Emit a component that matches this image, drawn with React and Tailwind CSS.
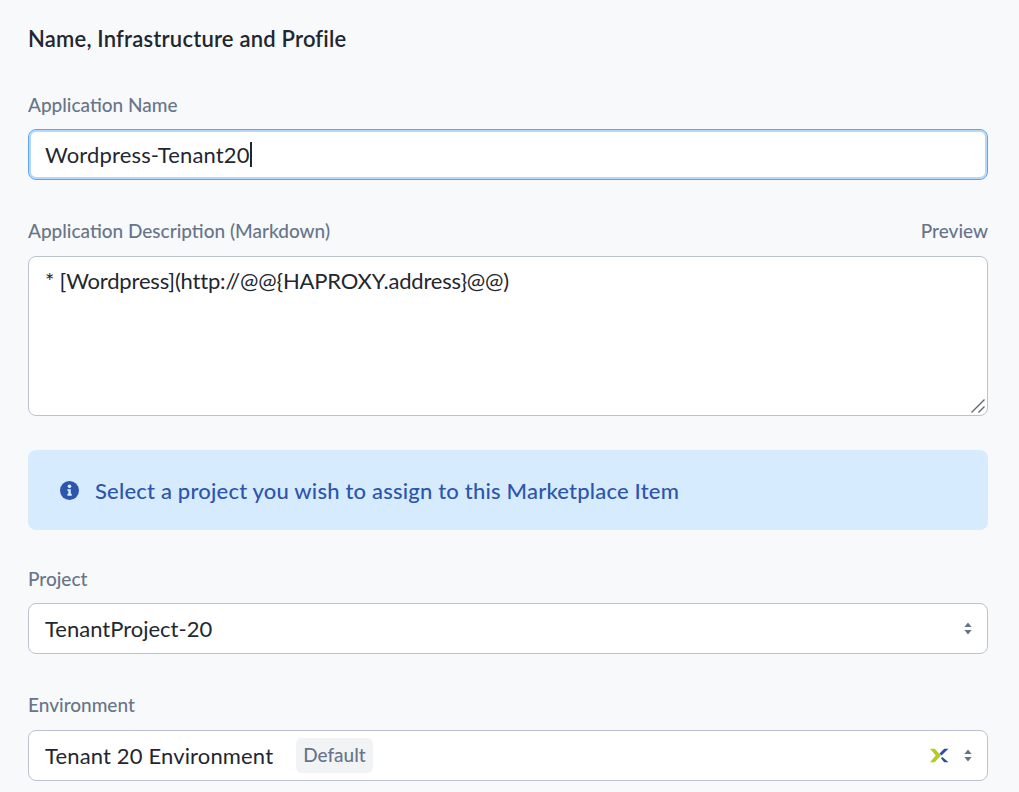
const font = "font-['Lato','Liberation_Sans',sans-serif]";

function Chevrons() {
  return (
    <svg width="8" height="13" viewBox="0 0 8 13" className="shrink-0">
      <path d="M4 0.5 L7.6 5 H0.4 Z" fill="#647386" />
      <path d="M4 12.5 L7.6 8 H0.4 Z" fill="#647386" />
    </svg>
  );
}

function NutanixLogo() {
  return (
    <svg width="19" height="15" viewBox="0 0 20 15" className="shrink-0">
      <path d="M0 0.5 H5 L11.5 7.5 L5 14.5 H0 L6 7.5 Z" fill="#b5cc1f" />
      <path d="M19.5 0.5 H15 L10 5.5 L12 7.5 Z" fill="#2450a5" />
      <path d="M19.5 14.5 H15 L11.5 10.5 L13 9 Z" fill="#2450a5" />
    </svg>
  );
}

function InfoIcon() {
  return (
    <svg width="19" height="19" viewBox="0 0 20 20" className="shrink-0">
      <circle cx="10" cy="10" r="10" fill="#2c55ad" />
      <circle cx="10" cy="5.6" r="1.9" fill="#d6ebfd" />
      <path d="M7.8 8.6 H11.4 V13.4 H12.4 V15.4 H7.8 V13.4 H8.8 V10.6 H7.8 Z" fill="#d6ebfd" />
    </svg>
  );
}

function Label({ children }) {
  return <div className="text-[19px] leading-[24px] font-medium text-[#67758a]">{children}</div>;
}

function SelectBox({ children }) {
  return (
    <div className="h-[51px] flex items-center pl-[16px] pr-[15px] bg-white border border-[#bcc2ce] rounded-[8px] text-[22px] text-[#1f2730]">
      {children}
    </div>
  );
}

export default function App() {
  return (
    <div className={`${font} h-[792px] overflow-hidden bg-[#f8f9fb] pl-[28px] pr-[31px] pt-[26px]`}>
      <h2 className="text-[22px] leading-[26px] font-semibold tracking-[0.2px] text-[#1f2730]">Name, Infrastructure and Profile</h2>

      <div className="mt-[41px] mb-[12px]">
        <Label>Application Name</Label>
      </div>
      <div className="h-[51px] flex items-center px-[16px] bg-white border border-[#5fa5ee] rounded-[8px] shadow-[inset_0_0_0_2px_#b5d8fb] text-[22px] tracking-[0.15px] text-[#1f2730]">
        Wordpress-Tenant20
        <span className="w-[2px] h-[25px] bg-[#1f2730]"></span>
      </div>

      <div className="mt-[39px] mb-[13px] flex justify-between">
        <Label>Application Description (Markdown)</Label>
        <Label>Preview</Label>
      </div>
      <div className="relative">
        <textarea
          readOnly
          defaultValue="* [Wordpress](http://@@{HAPROXY.address}@@)"
          className="block w-full h-[160px] resize-none px-[16px] py-[10px] bg-white border border-[#bcc2ce] rounded-[8px] text-[22px] leading-[28px] tracking-[-0.18px] text-[#1f2730] outline-none"
        />
        <svg width="16" height="16" viewBox="0 0 16 16" className="absolute right-[2px] bottom-[2px]">
          <path d="M1.5 14.5 L14.5 1.5 M8.5 14.5 L14.5 8.5" stroke="#666" strokeWidth="1.4" fill="none" />
        </svg>
      </div>

      <div className="h-[80px] mt-[34px] flex items-center gap-[16px] pl-[32px] bg-[#d6ebfd] rounded-[8px] text-[22px] tracking-[0.2px] font-medium text-[#2c55ad]">
        <InfoIcon />
        Select a project you wish to assign to this Marketplace Item
      </div>

      <div className="mt-[37px] mb-[12px]">
        <Label>Project</Label>
      </div>
      <SelectBox>
        <span className="flex-1">TenantProject-20</span>
        <Chevrons />
      </SelectBox>

      <div className="mt-[39px] mb-[13px]">
        <Label>Environment</Label>
      </div>
      <SelectBox>
        <span className="tracking-[0.15px]">Tenant 20 Environment</span>
        <span className="ml-[23px] h-[35px] flex items-center px-[7px] rounded-[6px] bg-[#f1f3f5] text-[19px] font-medium text-[#67758a]">Default</span>
        <span className="flex-1"></span>
        <NutanixLogo />
        <span className="w-[15px]"></span>
        <Chevrons />
      </SelectBox>
    </div>
  );
}
